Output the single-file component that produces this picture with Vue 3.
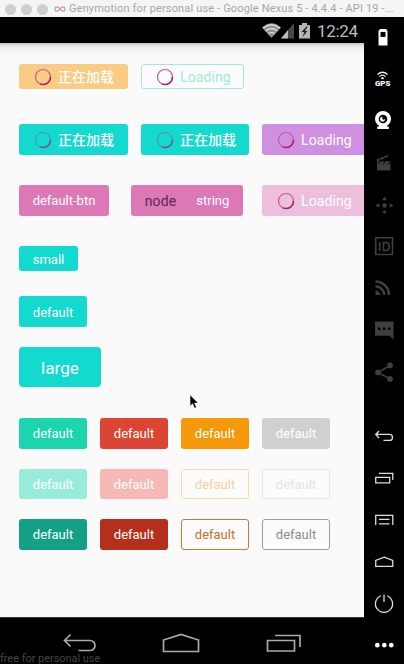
<script setup>
const pairs = [
  ['mint', 'red', 'orange', 'grey'],
  ['mint-off', 'red-off', 'orange-off', 'grey-off'],
  ['mint-on', 'red-on', 'orange-on', 'grey-on'],
]
</script>

<template>
  <div class="window">
    <header class="titlebar">
      <i class="light"></i><i class="light"></i><i class="light"></i>
      <svg class="logo" width="12" height="8" viewBox="0 0 12 8"><path d="M6 4C4.500 1.500 1 .7 1 4s3.500 2.500 5 0 5-3.300 5 0-3.500 2.500-5 0Z" fill="none" stroke="#cf8fb4" stroke-width="1.200" /></svg>
      <span class="title">Genymotion for personal use - Google Nexus 5 - 4.4.4 - API 19 -...</span>
    </header>
    <div class="body">
      <div class="device">
        <div class="status">
          <svg width="50" height="18" viewBox="0 0 50 18">
            <path d="M0 5.500Q9.500 -3 19 5.500L9.500 16Z" fill="#909090" />
            <path d="M1 6.300Q9.500-.7 18 6.300M3.500 9Q9.500 4 15.500 9M6.200 11.700Q9.500 9 12.800 11.700" fill="none" stroke="#ddd" stroke-width="1.400" />
            <path d="M19 16.500 32 1v15.500Z" fill="#484848" /><path d="M19 16.500 26 8v8.500Z" fill="#bbb" />
            <path d="M37 3h3V1h5v2h3v13.500H37Z" fill="#b5b5b5" /><path d="M44.500 4.500 39.500 10h2.700l-1.700 5 5-6h-2.700l3-4.500Z" fill="#222" />
          </svg>
          <span class="clock">12:24</span>
        </div>
        <main class="content">
          <div class="row r1">
            <button class="btn sm load amber"><svg class="spin" viewBox="0 0 18 18"><circle cx="9" cy="9" r="7.500" /><path d="M6 15.900A7.500 7.500 0 0 0 16.500 9" /></svg><span class="zh">正在加载</span></button>
            <button class="btn sm load outline-mint"><svg class="spin" viewBox="0 0 18 18"><circle cx="9" cy="9" r="7.500" /><path d="M6 15.900A7.500 7.500 0 0 0 16.500 9" /></svg><span class="en">Loading</span></button>
          </div>
          <div class="row r2">
            <button class="btn load teal"><svg class="spin cool" viewBox="0 0 18 18"><circle cx="9" cy="9" r="7.500" /><path d="M6 15.900A7.500 7.500 0 0 0 16.500 9" /></svg><span class="zh">正在加载</span></button>
            <button class="btn load teal second"><svg class="spin cool" viewBox="0 0 18 18"><circle cx="9" cy="9" r="7.500" /><path d="M6 15.900A7.500 7.500 0 0 0 16.500 9" /></svg><span class="zh">正在加载</span></button>
            <button class="btn load cut violet"><svg class="spin" viewBox="0 0 18 18"><circle cx="9" cy="9" r="7.500" /><path d="M6 15.900A7.500 7.500 0 0 0 16.500 9" /></svg><span class="en">Loading</span></button>
          </div>
          <div class="row r3">
            <button class="btn pink named">default-btn</button>
            <button class="btn pink mixed"><span class="node">node</span><span class="string">string</span></button>
            <button class="btn load cut rose"><svg class="spin" viewBox="0 0 18 18"><circle cx="9" cy="9" r="7.500" /><path d="M6 15.900A7.500 7.500 0 0 0 16.500 9" /></svg><span class="en">Loading</span></button>
          </div>
          <div class="row r4"><button class="btn sm teal small">small</button></div>
          <div class="row r5"><button class="btn teal plain">default</button></div>
          <div class="row r6"><button class="btn teal large">large</button></div>
          <div class="types">
            <template v-for="(line, i) in pairs" :key="i">
              <button v-for="kind in line" :key="kind" class="btn plain" :class="kind">default</button>
            </template>
          </div>
        </main>
        <nav class="navbar">
          <svg width="34" height="20" viewBox="0 0 34 20"><path d="M7.500 1.500 1.500 7.500l6 6M2 7.500h25a5 5 0 0 1 0 10H15.500" /></svg>
          <svg width="38" height="20" viewBox="0 0 38 20"><path d="M1.500 18.500V7L19 1.500 36.500 7v11.500Z" /></svg>
          <svg class="recent" width="36" height="20" viewBox="0 0 36 20"><path d="M1.500 7.500h27v10.500h-27ZM9 2.500h25V14" /></svg>
          <span class="mark">free for personal use</span>
        </nav>
      </div>
      <aside class="tools">
        <div class="group">
          <svg viewBox="0 0 40 42"><path d="M15.500 13h7v1.500h1v15h-9v-15h1Z" fill="#fff" /><path d="M16.500 16h5v5h-5Z" fill="#000" /></svg>
          <svg viewBox="0 0 40 42"><path d="M13.500 16.500q5-4.500 10 0M15.300 18.700q3.200-3 6.400 0" fill="none" stroke="#eee" stroke-width="1.300" /><circle cx="18.500" cy="20.200" r="1.200" fill="#eee" /><text x="10.900" y="28.300" textLength="15.500" lengthAdjust="spacingAndGlyphs" class="gps">GPS</text></svg>
          <svg viewBox="0 0 40 42"><circle cx="19" cy="19" r="8" fill="#fff" /><circle cx="19" cy="19" r="4.300" fill="#000" /><circle cx="18.600" cy="19.300" r="2.500" fill="#fff" /><circle cx="19.700" cy="18.100" r="1.600" fill="#000" /><path d="M15 25h8v1.500h1.800V29H13.200v-2.500H15Z" fill="#fff" /></svg>
          <svg viewBox="0 0 40 42" class="dim"><path d="M13 19.500h13.500v9H13Z" /><path d="m12.500 17.500 11.500-5 1 2-12 5Z" /><path d="m15 16 2 2.500m2-4.500 2 2.500m1-4 2 2.500M14 22.500l2-2.500m3 2.500 2-2.500m3 2.500 2-2.500" class="cutline" /></svg>
          <svg viewBox="0 0 40 42" class="dim"><circle cx="20.500" cy="21.500" r="2.200" /><path d="m20.500 12.500 2.300 3.800h-4.600ZM20.500 30.500l2.300-3.800h-4.600ZM11.500 21.500l3.800-2.300v4.600ZM29.500 21.500l-3.800-2.300v4.600Z" /></svg>
          <svg viewBox="0 0 40 42"><path d="M11.700 12.800h16.800v16.800H11.700ZM15.700 17v9M19.500 17.500h2.500c4.200 0 4.200 8 0 8h-2.500Z" fill="none" stroke="#3f3f3f" stroke-width="1.600" /></svg>
          <svg viewBox="0 0 40 42"><g fill="none" stroke="#3f3f3f" stroke-width="2.500"><path d="M11.500 14.500a13.500 13.500 0 0 1 13.500 13.500M11.500 19.300a8.700 8.700 0 0 1 8.700 8.700" /></g><path d="M11.500 23.500a4.700 4.700 0 0 1 4.700 4.500h-4.700Z" fill="#3f3f3f" /></svg>
          <svg viewBox="0 0 40 42" class="dim"><path d="M11 12.500h18.500v18l-4-3.700H11Z" /><path d="M14 18.500h2.500V21H14ZM19 18.500h2.500V21H19ZM24 18.500h2.500V21H24Z" fill="#000" /></svg>
          <svg viewBox="0 0 40 42" class="dim"><path d="M26 14.500 14 21.500l12 6.500" fill="none" stroke="#3f3f3f" stroke-width="1.700" /><circle cx="26" cy="14.500" r="2.900" /><circle cx="14" cy="21.500" r="2.900" /><circle cx="26" cy="28" r="2.900" /></svg>
        </div>
        <div class="group lower">
          <svg viewBox="0 0 40 42"><path d="m15 16-3.300 3.500L15 23M12 19.500h13.500a3 3 0 0 1 0 6h-6" /></svg>
          <svg viewBox="0 0 40 42"><path d="M11.700 20.500h14v5.500h-14ZM15 16.500h13.800v6.500" /></svg>
          <svg viewBox="0 0 40 42"><path d="M11.700 26v-9.500h17.100V26M15 20.500h10.500M15 25h10.500" /></svg>
          <svg viewBox="0 0 40 42"><path d="M11.700 25.500v-6l8.500-3.200 8.600 3.200v6Z" /></svg>
          <svg viewBox="0 0 40 42"><path d="M17 12.800a8.600 8.600 0 1 0 6 0M20 11.500v7.500" /></svg>
          <svg viewBox="0 0 40 42" class="dots"><circle cx="13.300" cy="21.200" r="2.300" /><circle cx="20.300" cy="21.200" r="2.300" /><circle cx="27.300" cy="21.200" r="2.300" /></svg>
        </div>
      </aside>
    </div>
    <svg class="cursor" width="11" height="16" viewBox="0 0 11 16"><path d="M1 .8v11.400l2.600-2.400 1.900 4.500 2-.9-1.900-4.300h3.700Z" fill="#000" stroke="#fff" stroke-width=".6" /></svg>
  </div>
</template>

<style>
body { background: #000; overflow: hidden; }
</style>

<style scoped>
* { box-sizing: border-box; }
.window { position: relative; width: 404px; height: 664px; display: flex; flex-direction: column; overflow: hidden; background: #000; font-family: Roboto, "Noto Sans CJK SC", sans-serif; }
.titlebar { height: 17px; flex: none; background: #f6f5f6; display: flex; align-items: center; padding: 1px 0 0 5px; white-space: nowrap; }
.light { width: 11px; height: 11px; border-radius: 50%; background: #cfcfcf; margin-right: 5px; flex: none; }
.logo { flex: none; margin-right: 3px; margin-left: 1px; }
.title { font-size: 11px; line-height: 16px; color: #a6a6a6; letter-spacing: .15px; }
.body { display: flex; flex: 1; min-height: 0; }
.device { width: 364px; display: flex; flex-direction: column; }
.status { height: 26px; display: flex; justify-content: flex-end; align-items: center; padding: 2px 6px 0 0; gap: 5px; }
.clock { font-size: 17px; line-height: 24px; color: #bdbdbd; width: 41px; letter-spacing: -.3px; }
.content { height: 574px; background: linear-gradient(#c4c4c4, #e7e7e7 3px, #f4f4f4 7px, #fafafa 13px); padding: 21px 0 0 19px; overflow: hidden; }
.row { display: flex; gap: 13px; }
.r2 { margin-top: 35px; }
.r3 { margin-top: 30px; }
.r4 { margin-top: 30px; }
.r5 { margin-top: 25px; }
.r6 { margin-top: 20px; }
.types { display: grid; grid-template-columns: repeat(4, 68px); column-gap: 13px; row-gap: 20px; margin-top: 31px; }
.btn { height: 31px; flex: none; border: 1px solid transparent; border-radius: 3px; padding: 0; color: #fff; font: 13px/20px Roboto, "Noto Sans CJK SC", sans-serif; display: flex; align-items: center; justify-content: center; white-space: nowrap; }
.types .btn { height: 30.500px; }
.sm { height: 25px; }
.load { width: 109px; justify-content: flex-start; padding-left: 14px; }
.load.outline-mint { width: 103px; }
.load.second { width: 108px; }
.load.cut { width: 109px; }
.spin { width: 18px; height: 18px; margin-right: 6px; fill: none; stroke: #c85a8c; stroke-width: 1.200; }
.spin path { stroke: #a82068; stroke-width: 1.500; }
.spin.cool { stroke: #5c8fb4; }
.spin.cool path { stroke: #7a4d98; }
.zh { font-size: 14px; font-weight: 500; }
.en { font-size: 14px; letter-spacing: .1px; }
.named { width: 90px; margin-right: 9px; }
.mixed { width: 112px; margin-right: 6px; gap: 20px; }
.node { font-size: 14px; letter-spacing: .15px; color: #5c2a49; }
.small { width: 59px; }
.plain { width: 68px; }
.large { width: 82px; height: 40px; font-size: 17.200px; border-radius: 4px; }
.small, .plain, .large { padding-top: 2px; }
.amber { background: #facb82; }
.teal { background: #13d9ce; }
.violet { background: #d090e2; }
.pink { background: #dc78b6; }
.rose { background: #edbfdc; }
.mint { background: #1bd5ac; }
.red { background: #dc4433; }
.orange { background: #f59809; }
.grey { background: #d0d0d0; }
.mint-off { background: #99ecdc; }
.red-off { background: #f6b9b5; }
.mint-on { background: #14a085; }
.red-on { background: #b5301c; }
.outline-mint, .orange-off, .grey-off, .orange-on, .grey-on { background: #fcfcfc; }
.outline-mint { border-color: #9febdb; color: #9febdb; }
.orange-off { border-color: #fad7a4; color: #fad19a; }
.grey-off { border-color: #e6e6e6; color: #e3e3e3; }
.orange-on { border-color: #cc7736; color: #c96f2b; }
.grey-on { border-color: #9d9d9d; color: #8c8c8c; }
.navbar { position: relative; height: 47px; display: flex; padding: 15px 0 0 63px; gap: 65px; border-top: 1px solid #333; }
.navbar svg { fill: none; stroke: #aaa; stroke-width: 1.700; flex: none; }
.navbar .recent { margin-left: 1px; }
.mark { position: absolute; left: 0; bottom: 0; font-size: 11px; line-height: 11px; color: #454545; letter-spacing: -.04px; white-space: nowrap; }
.tools { width: 40px; margin-top: -1px; }
.group { display: flex; flex-direction: column; }
.group svg { width: 40px; height: 41.900px; flex: none; }
.lower { margin-top: 22px; }
.lower svg { fill: none; stroke: #ddd; stroke-width: 1.300; }
.lower .dots { fill: #fff; stroke: none; }
.dim { fill: #3f3f3f; }
.cutline { stroke: #000; stroke-width: 1; fill: none; }
.gps { font: 900 7px Roboto, sans-serif; fill: #fff; }
.cursor { position: absolute; left: 189px; top: 394px; }
</style>
